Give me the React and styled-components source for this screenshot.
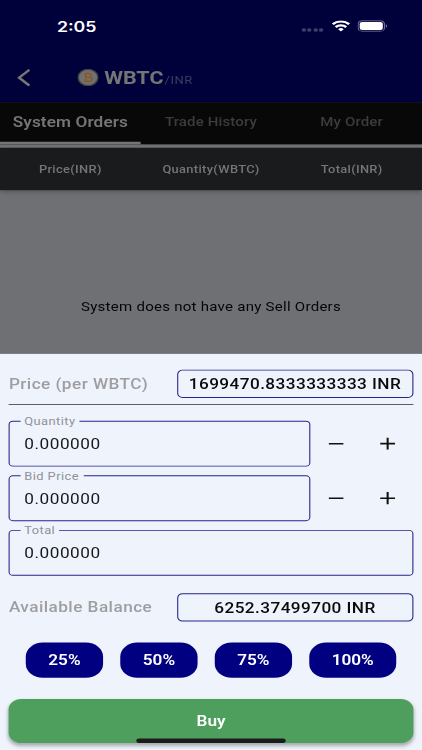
import { useState } from 'react';
import styled, { createGlobalStyle } from 'styled-components';

const percents = ['25%', '50%', '75%', '100%'];

export default function App() {
  const [tab, setTab] = useState(0);
  return (
    <>
      <GlobalStyle />
      <Viewport>
        <Screen>
          <Header>
            <StatusBar>
              <Clock>2:05</Clock>
              <StatusIcons>
                <Dots><i /><i /><i /><i /></Dots>
                <WifiIcon />
                <BatteryIcon />
              </StatusIcons>
            </StatusBar>
            <AppBar>
              <BackIcon />
              <CoinIcon />
              <Pair>WBTC</Pair>
              <Quote>/INR</Quote>
            </AppBar>
          </Header>
          <Tabs>
            {['System Orders', 'Trade History', 'My Order'].map((name, i) => (
              <Tab key={name} $active={i === tab} onClick={() => setTab(i)}>{name}</Tab>
            ))}
          </Tabs>
          <Columns>
            <Column>Price(INR)</Column>
            <Column>Quantity(WBTC)</Column>
            <Column>Total(INR)</Column>
          </Columns>
          <Empty>System does not have any Sell Orders</Empty>
          <Sheet>
            <InfoRow>
              <InfoLabel>Price (per WBTC)</InfoLabel>
              <InfoValue>1699470.8333333333 INR</InfoValue>
            </InfoRow>
            <Divider />
            <Fields>
              <Field label="Quantity" stepper />
              <Field label="Bid Price" stepper />
              <Field label="Total" />
            </Fields>
            <InfoRow>
              <InfoLabel>Available Balance</InfoLabel>
              <InfoValue>6252.37499700 INR</InfoValue>
            </InfoRow>
            <Chips>
              {percents.map((p) => <Chip key={p} $wide={p === '100%'}>{p}</Chip>)}
            </Chips>
            <BuyButton>Buy</BuyButton>
          </Sheet>
          <HomeIndicator />
        </Screen>
      </Viewport>
    </>
  );
}

function Field({ label, stepper }) {
  return (
    <FieldRow>
      <Outline>
        <Legend>{label}</Legend>
        <Value>0.000000</Value>
      </Outline>
      {stepper && (
        <>
          <StepButton aria-label="minus">
            <svg width="14" height="14" viewBox="0 0 14 14"><path d="M0 7h14" stroke="#111" strokeWidth="1.8" /></svg>
          </StepButton>
          <StepButton aria-label="plus">
            <svg width="14" height="14" viewBox="0 0 14 14"><path d="M0 7h14M7 0v14" stroke="#111" strokeWidth="1.9" /></svg>
          </StepButton>
        </>
      )}
    </FieldRow>
  );
}

function WifiIcon() {
  return (
    <svg width="17" height="13" viewBox="0 0 17 13" fill="none" stroke="#fff" strokeWidth="2.5">
      <path d="M.9 4.6a10.7 10.7 0 0 1 15.2 0" />
      <path d="M3.6 7.8a6.9 6.9 0 0 1 9.8 0" />
      <path d="M8.5 12.8 5.9 10.2a3.7 3.7 0 0 1 5.2 0z" fill="#fff" stroke="none" />
    </svg>
  );
}

function BatteryIcon() {
  return (
    <svg width="28" height="13" viewBox="0 0 28 13">
      <rect x=".5" y=".5" width="24.5" height="12" rx="3.8" fill="none" stroke="#77779b" />
      <rect x="2" y="2" width="21.5" height="9" rx="2.5" fill="#fff" />
      <path d="M26.3 4.5v4a2.2 2.2 0 0 0 0-4z" fill="#77779b" />
    </svg>
  );
}

function BackIcon() {
  return (
    <svg width="12" height="20" viewBox="0 0 12 20" fill="none" stroke="#757575" strokeWidth="2.6">
      <path d="M11.4 1.2 1.8 10.2 11.4 19.2" />
    </svg>
  );
}

function CoinIcon() {
  return (
    <Coin width="20" height="20" viewBox="0 0 20 20">
      <circle cx="10" cy="10" r="9.2" fill="#706f72" stroke="#45433f" strokeWidth="1.4" />
      <path
        d="M6.3 5.7h4.7q2 0 2 2t-2 2H8M11 9.9q2.6 0 2.6 2.2T11 14.3H6.3M7.9 5.7v8.6M9.9 4.2v1.5M9.9 14.3v1.5"
        fill="none"
        stroke="#935412"
        strokeWidth="1.2"
      />
    </Coin>
  );
}

const GlobalStyle = createGlobalStyle`
  * {
    box-sizing: border-box;
  }
  body {
    margin: 0;
    overflow: hidden;
    font-family: Roboto, sans-serif;
  }
  button {
    border: 0;
    padding: 0;
    background: none;
    font-family: inherit;
  }
`;

const Viewport = styled.div`
  width: 422px;
  height: 750px;
  overflow: hidden;
`;

/* 393x852 device screen fitted to the viewport */
const Screen = styled.div`
  position: relative;
  width: 393px;
  height: 852px;
  display: flex;
  flex-direction: column;
  transform: scale(1.0738, 0.8803);
  transform-origin: 0 0;
  background: #6e7074;
`;

const Header = styled.header`
  height: 115.5px;
  background: #00003b;
`;

const StatusBar = styled.div`
  height: 59px;
  padding: 0 32px 0 53px;
  display: flex;
  align-items: center;
  justify-content: space-between;
`;

const Clock = styled.span`
  font-family: Inter, sans-serif;
  font-size: 16.5px;
  font-weight: 600;
  color: #fff;
`;

const StatusIcons = styled.div`
  display: flex;
  align-items: center;
  gap: 7.5px;
`;

const Dots = styled.div`
  display: flex;
  gap: 1.9px;
  padding-top: 9px;
  i {
    width: 3.6px;
    height: 3.6px;
    border-radius: 50%;
    background: #40406c;
  }
`;

const AppBar = styled.div`
  height: 57px;
  padding-left: 16px;
  display: flex;
  align-items: center;
`;

const Coin = styled.svg`
  margin-left: 44px;
`;

const Pair = styled.span`
  margin-left: 5px;
  font-size: 20px;
  font-weight: 700;
  color: #757575;
`;

const Quote = styled.span`
  margin: 6px 0 0 1px;
  font-size: 12px;
  letter-spacing: 0.5px;
  color: #3c3c62;
`;

const Tabs = styled.nav`
  height: 52.5px;
  display: flex;
  background: #080808;
  border-bottom: 4px solid #707176;
`;

const Tab = styled.button`
  flex: 1;
  padding-bottom: ${({ $active }) => ($active ? '0' : '3px')};
  border-bottom: ${({ $active }) => ($active ? '3px solid #757575' : '0')};
  color: ${({ $active }) => ($active ? '#757575' : '#3c3c3c')};
  font-size: ${({ $active }) => ($active ? '16px' : '14px')};
  font-weight: ${({ $active }) => ($active ? '600' : '500')};
  letter-spacing: ${({ $active }) => ($active ? '0.1px' : '0.12px')};
  white-space: nowrap;
`;

const Columns = styled.div`
  height: 48px;
  display: flex;
  align-items: center;
  background: #1a1b1d;
  box-shadow: 0 2px 5px rgba(0, 0, 0, 0.3);
`;

const Column = styled.div`
  flex: 1;
  text-align: center;
  font-size: 12px;
  font-weight: 500;
  letter-spacing: 0.3px;
  color: #757575;
`;

const Empty = styled.div`
  height: 186px;
  padding-top: 124px;
  text-align: center;
  font-size: 14px;
  letter-spacing: 0.24px;
  color: #050506;
`;

const Sheet = styled.section`
  flex: 1;
  padding: 18px 8.3px 0;
  background: #eff3fc;
`;

const InfoRow = styled.div`
  height: 32px;
  display: flex;
  align-items: center;
  justify-content: space-between;
`;

const InfoLabel = styled.span`
  font-size: 16px;
  font-weight: 500;
  letter-spacing: 0.42px;
  color: #9e9ea1;
`;

const InfoValue = styled.div`
  width: 220px;
  height: 32px;
  line-height: 31px;
  border: 1px solid #24248c;
  border-radius: 5px;
  text-align: center;
  font-size: 16px;
  font-weight: 500;
  letter-spacing: 0.4px;
  color: #0b0b0d;
`;

const Divider = styled.div`
  height: 1.2px;
  margin-top: 7px;
  background: #4a4b50;
`;

const Fields = styled.div`
  padding: 17.8px 0 20px;
  display: grid;
  gap: 10px;
`;

const FieldRow = styled.div`
  height: 52px;
  display: flex;
`;

const Outline = styled.div`
  position: relative;
  flex: 1;
  border: 1px solid #24248c;
  border-radius: 4px;
`;

const Legend = styled.span`
  position: absolute;
  top: -7px;
  left: 9.3px;
  padding: 0 4px;
  background: #eff3fc;
  font-size: 12px;
  line-height: 14px;
  letter-spacing: 0.4px;
  color: #8f919b;
`;

const Value = styled.div`
  padding-left: 13.3px;
  line-height: 52px;
  font-size: 16px;
  letter-spacing: 0.5px;
  color: #16171a;
`;

const StepButton = styled.button`
  width: 48px;
  display: grid;
  place-items: center;
`;

const Chips = styled.div`
  padding: 24px 15.7px;
  display: flex;
  gap: 16px;
`;

const Chip = styled.button`
  width: ${({ $wide }) => ($wide ? '81px' : '72px')};
  height: 40px;
  border-radius: 16px;
  background: #000080;
  color: #fff;
  font-size: 16px;
  font-weight: 600;
`;

const BuyButton = styled.button`
  width: 100%;
  height: 50px;
  padding-top: 1px;
  border-radius: 12px;
  background: #4e9f5d;
  box-shadow: 0 3px 4px rgba(0, 0, 0, 0.3);
  color: #fff;
  font-size: 16px;
  font-weight: 600;
`;

const HomeIndicator = styled.div`
  position: absolute;
  left: 126.7px;
  bottom: 8px;
  width: 139.5px;
  height: 5px;
  border-radius: 3px;
  background: #1a1c1b;
`;
